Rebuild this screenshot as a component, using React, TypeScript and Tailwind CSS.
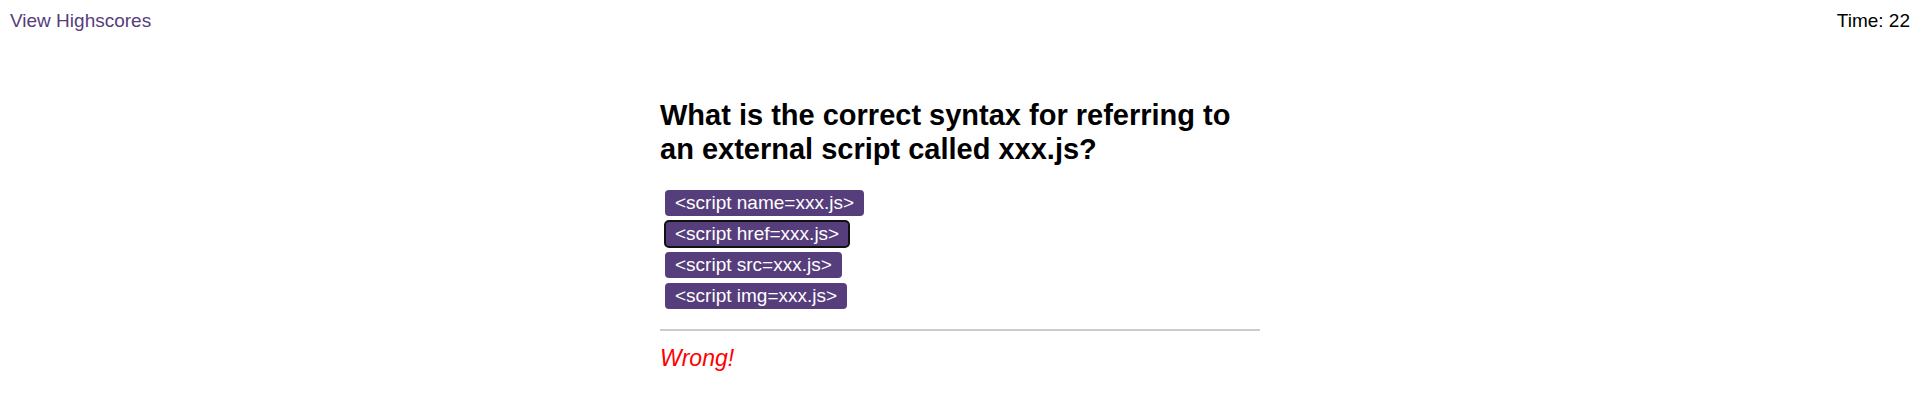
import { useState } from 'react'

const choices = [
  '<script name=xxx.js>',
  '<script href=xxx.js>',
  '<script src=xxx.js>',
  '<script img=xxx.js>',
]

export default function App() {
  const [selected] = useState(1)
  const [time] = useState(22)

  return (
    <div className="min-h-screen bg-white text-black font-['Liberation_Sans',Arial,sans-serif]">
      <header className="flex items-start justify-between px-[10px] pt-[10px]">
        <a href="#" className="text-[19px] leading-[22px] text-[#563d7c]">
          View Highscores
        </a>
        <div className="text-[19px] leading-[22px]">Time: {time}</div>
      </header>

      <main className="mx-auto mt-[66px] w-[600px]">
        <h2 className="text-[29px] font-bold leading-[34px]">
          What is the correct syntax for referring to an external script called xxx.js?
        </h2>

        <div className="mt-[24px] ml-[5px] flex flex-col items-start gap-[5px]">
          {choices.map((choice, i) => (
            <button
              key={choice}
              className={
                i === selected
                  ? 'rounded-[4px] bg-[#563d7c] px-[10px] py-[2px] text-[19px] leading-[22px] text-white outline-2 outline-[#111] outline-offset-[-1px]'
                  : 'rounded-[4px] bg-[#563d7c] px-[10px] py-[2px] text-[19px] leading-[22px] text-white'
              }
            >
              {choice}
            </button>
          ))}
        </div>

        <div className="mt-[20px] h-[2px] bg-[#cccccc]"></div>
        <p className="mt-[10px] text-[23px] italic text-[#ff0000]">Wrong!</p>
      </main>
    </div>
  )
}
